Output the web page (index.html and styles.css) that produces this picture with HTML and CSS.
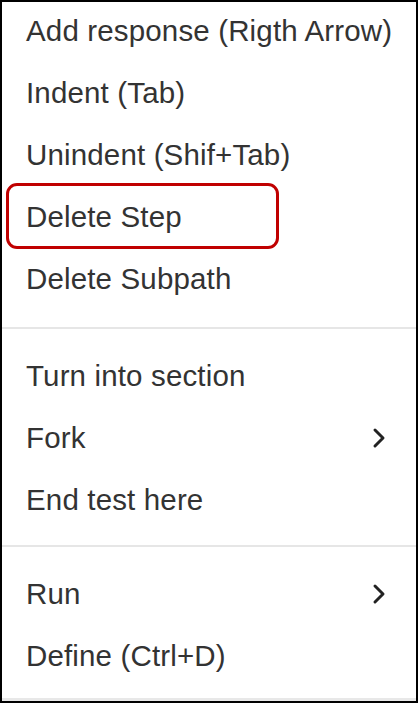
FILE: index.html
```html
<!DOCTYPE html>
<html>
<head>
<meta charset="utf-8">
<link rel="stylesheet" href="styles.css">
</head>
<body>
<div class="menu">
  <div class="group first">
    <div class="item">Add response (Rigth Arrow)</div>
    <div class="item">Indent (Tab)</div>
    <div class="item">Unindent (Shif+Tab)</div>
    <div class="item highlighted">Delete Step</div>
    <div class="item">Delete Subpath</div>
  </div>
  <div class="divider first-divider"></div>
  <div class="group">
    <div class="item">Turn into section</div>
    <div class="item has-sub">Fork<svg class="chev" viewBox="0 0 14 22" width="14" height="22"><path d="M3 3 L11 11 L3 19" fill="none" stroke="#222" stroke-width="3" stroke-linecap="round" stroke-linejoin="round"/></svg></div>
    <div class="item">End test here</div>
  </div>
  <div class="divider"></div>
  <div class="group">
    <div class="item has-sub">Run<svg class="chev" viewBox="0 0 14 22" width="14" height="22"><path d="M3 3 L11 11 L3 19" fill="none" stroke="#222" stroke-width="3" stroke-linecap="round" stroke-linejoin="round"/></svg></div>
    <div class="item">Define (Ctrl+D)</div>
  </div>
  <div class="bottom-strip"></div>
</div>
</body>
</html>
```
FILE: styles.css
```css
html, body {
  margin: 0;
  padding: 0;
  background: #ffffff;
}
.menu {
  box-sizing: border-box;
  width: 418px;
  height: 703px;
  border: 2px solid #000;
  background: #fff;
  display: flex;
  flex-direction: column;
  font-family: "Liberation Sans", Arial, sans-serif;
  font-size: 29.5px;
  letter-spacing: 0.15px;
  color: #333;
}
.group {
  display: flex;
  flex-direction: column;
}
.group.first {
  margin-top: -3px;
}
.item {
  position: relative;
  height: 62px;
  display: flex;
  align-items: center;
  justify-content: space-between;
  padding: 1px 30px 0 24px;
  box-sizing: border-box;
  white-space: nowrap;
}
.item.highlighted::after {
  content: "";
  position: absolute;
  left: 4px;
  top: -2px;
  width: 273px;
  height: 66px;
  border: 3px solid #c00000;
  border-radius: 11px;
  box-sizing: border-box;
}
.divider {
  height: 2px;
  background: #e6e6e6;
  margin: 15px 0;
}
.divider.first-divider {
  margin-top: 18px;
}
.chev {
  display: block;
}
.bottom-strip {
  margin-top: auto;
  height: 3px;
  background: #e8e8e8;
}
```
